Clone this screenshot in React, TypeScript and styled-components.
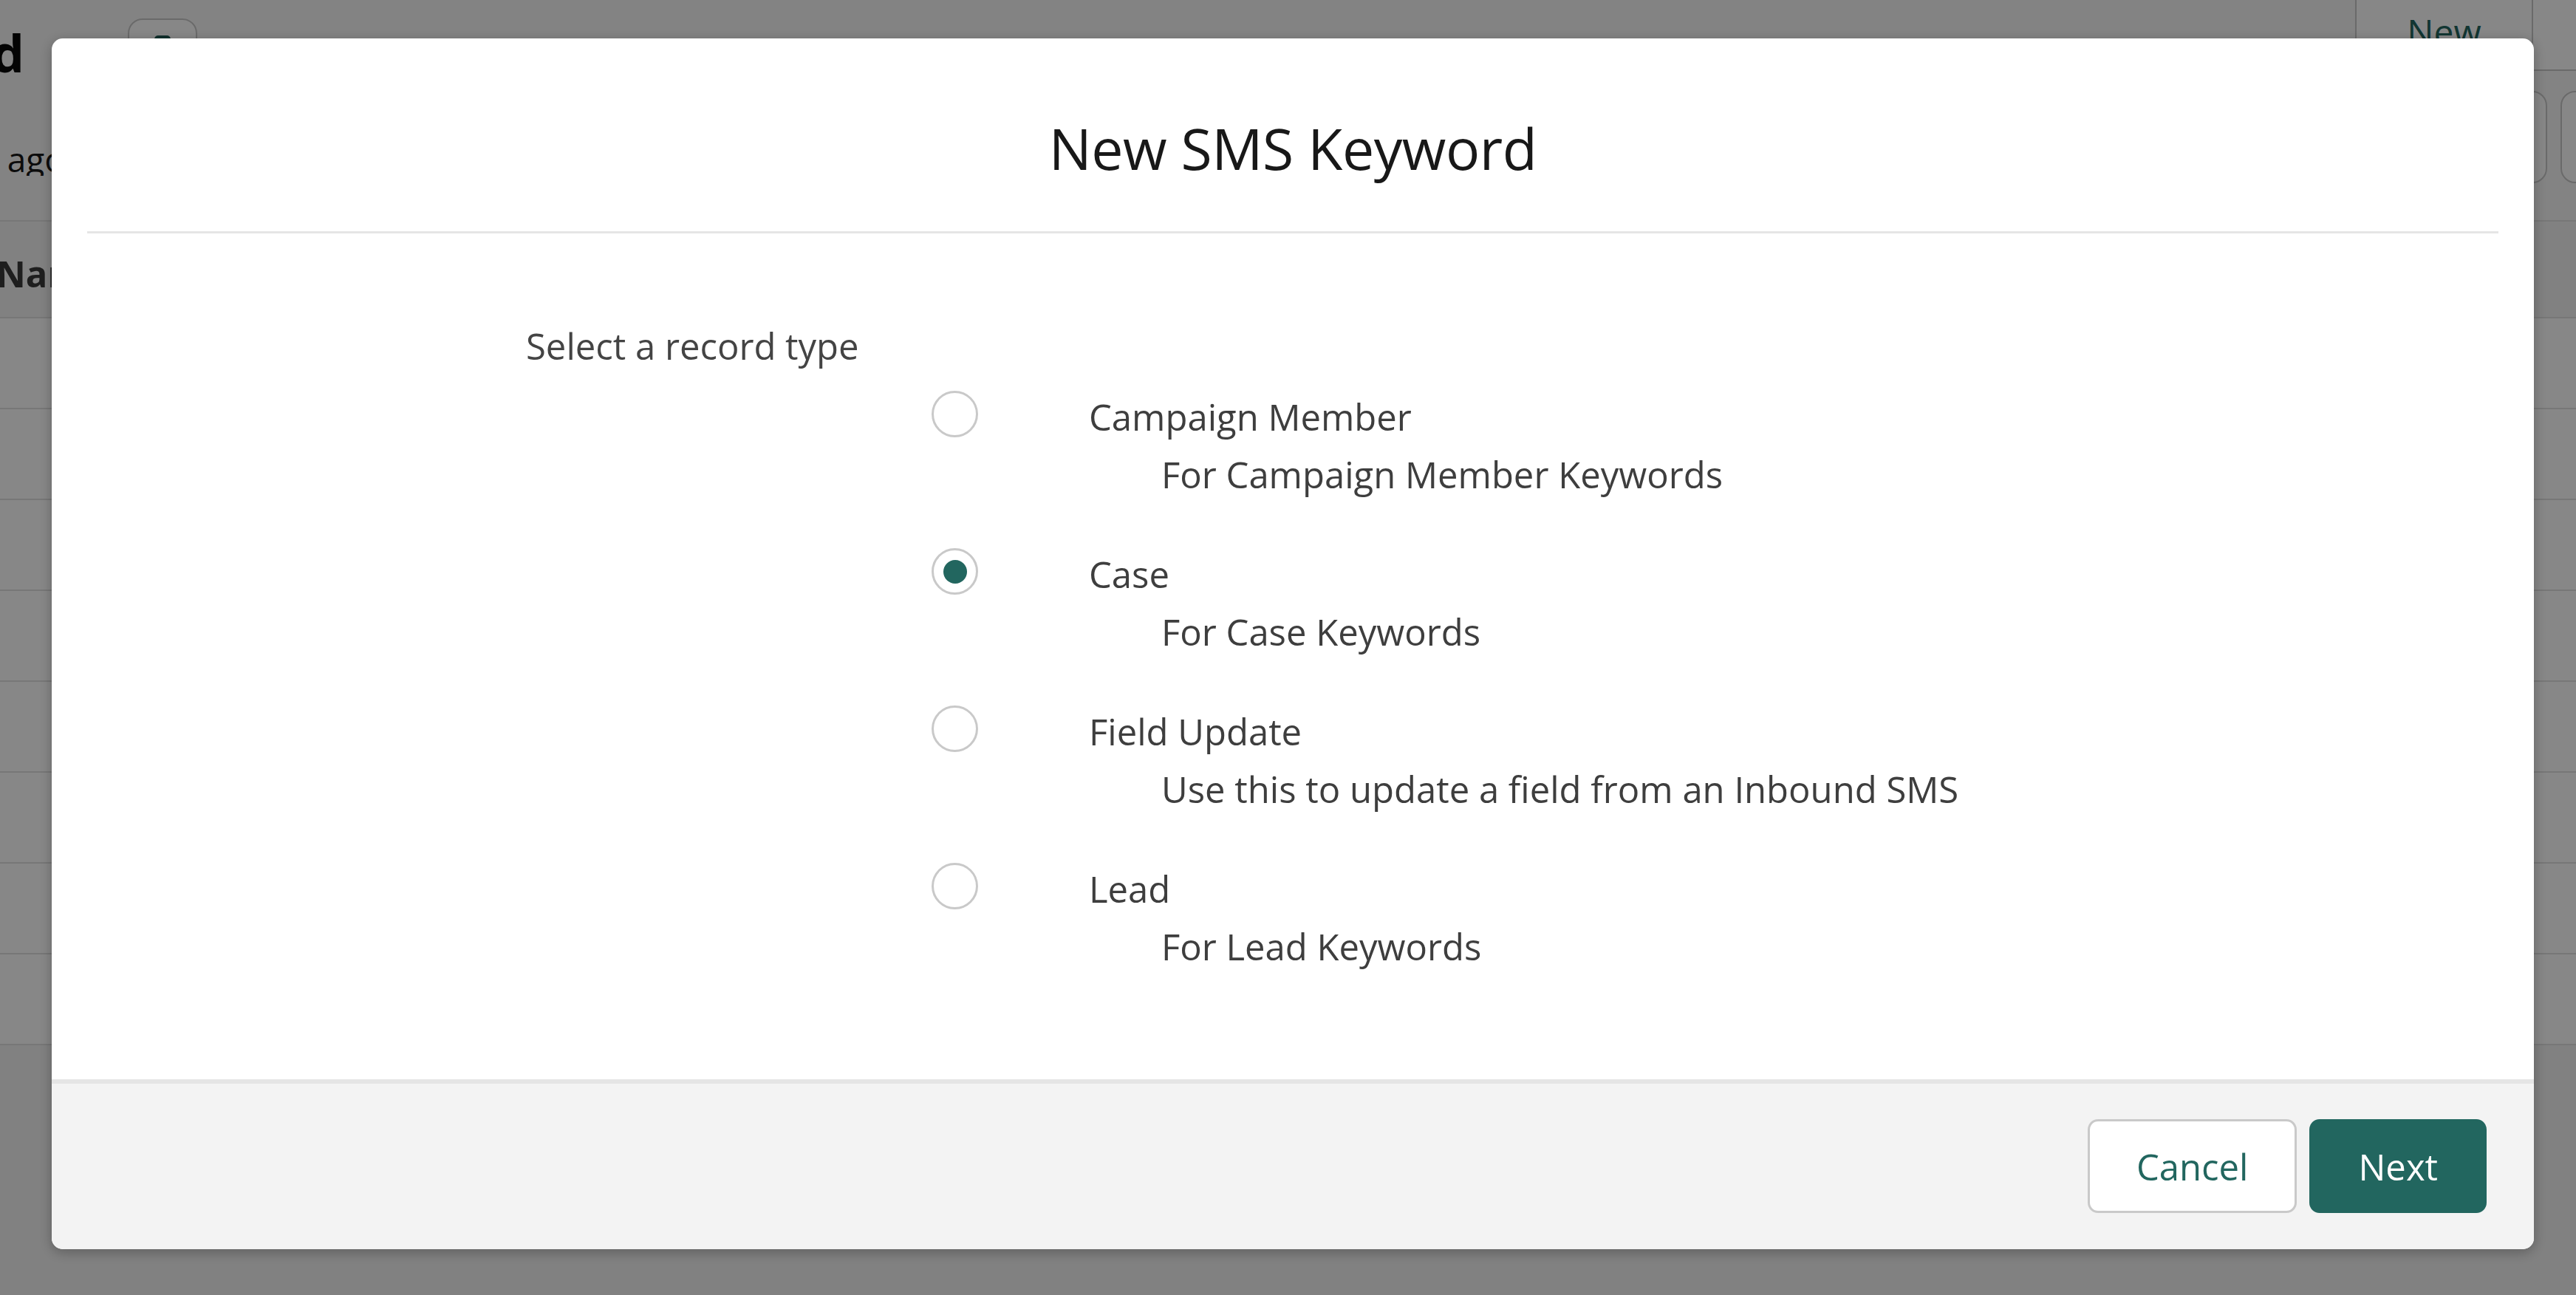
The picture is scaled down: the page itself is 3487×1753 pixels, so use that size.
import React from 'react';
import styled, { createGlobalStyle } from 'styled-components';

const TEAL = '#22665f';

const GlobalStyle = createGlobalStyle`
  html, body {
    margin: 0;
    padding: 0;
  }
  body {
    font-family: "Open Sans", "Noto Sans", sans-serif;
    background: #f3f3f3;
    overflow: hidden;
  }
  * {
    box-sizing: border-box;
  }
`;

// ---------- background page ----------

const Page = styled.div`
  width: 100%;
  height: 100vh;
  display: flex;
  flex-direction: column;
  background: #f3f3f3;
  overflow: hidden;
`;

const PageHeader = styled.header`
  height: 300px;
  background: #f8f8f8;
  border-bottom: 2px solid #e0e0e0;
  display: flex;
  flex-direction: column;
`;

const HeaderRow = styled.div<{ $height: number }>`
  height: ${(p) => p.$height}px;
  display: flex;
  align-items: flex-start;
`;

const TailClip = styled.div<{ $width: number; $top: number }>`
  width: ${(p) => p.$width}px;
  margin-top: ${(p) => p.$top}px;
  flex-shrink: 0;
  overflow: hidden;
  display: flex;
  justify-content: flex-end;
  white-space: nowrap;
`;

const PageTitle = styled.h1`
  margin: 0;
  font-size: 70px;
  line-height: 70px;
  font-weight: 700;
  color: #080808;
`;

const PageSubtitle = styled.span`
  font-size: 46px;
  line-height: 46px;
  color: #181818;
`;

const IconButton = styled.button<{ $top: number; $left?: number }>`
  width: 94px;
  height: 125px;
  margin-top: ${(p) => p.$top}px;
  margin-left: ${(p) => p.$left ?? 0}px;
  flex-shrink: 0;
  border: 2px solid #c9c9c9;
  border-radius: 20px;
  background: #ffffff;
  display: flex;
  justify-content: center;
  align-items: flex-start;
  padding-top: 21px;
`;

const Spacer = styled.div`
  flex: 1;
`;

const ActionGroup = styled.div<{ $top: number; $overflow: number; $gap: number }>`
  display: flex;
  gap: ${(p) => p.$gap}px;
  margin-top: ${(p) => p.$top}px;
  margin-right: -${(p) => p.$overflow}px;
  flex-shrink: 0;
`;

const GroupButton = styled.button<{ $first?: boolean }>`
  height: 126px;
  width: ${(p) => (p.$first ? 241 : 200)}px;
  border: 2px solid #c9c9c9;
  border-left-width: ${(p) => (p.$first ? 2 : 0)}px;
  border-radius: ${(p) => (p.$first ? '20px 0 0 20px' : '0 20px 20px 0')};
  background: #ffffff;
  color: ${TEAL};
  font-family: inherit;
  font-size: 48px;
  padding: 18px 0 0;
  display: flex;
  align-items: center;
  justify-content: center;
`;

const Table = styled.div`
  display: flex;
  flex-direction: column;
`;

const TableHead = styled.div`
  height: 131px;
  background: #f3f3f3;
  border-bottom: 2px solid #e0e0e0;
  display: flex;
  align-items: center;
  padding-top: 10px;
`;

const HeadCell = styled.span`
  margin-left: -5px;
  font-size: 49px;
  font-weight: 700;
  color: #3a3a3a;
`;

const TableRow = styled.div`
  height: 123px;
  background: #ffffff;
  border-bottom: 2px solid #e0e0e0;
`;

// ---------- modal ----------

const Backdrop = styled.div`
  position: fixed;
  inset: 0;
  background: rgba(0, 0, 0, 0.47);
  display: flex;
  align-items: flex-start;
`;

const Modal = styled.section`
  width: 3360px;
  margin: 52px 0 0 70px;
  background: #ffffff;
  border-radius: 15px;
  overflow: hidden;
  box-shadow: 0 4px 18px rgba(0, 0, 0, 0.28);
  display: flex;
  flex-direction: column;
`;

const ModalHeader = styled.div`
  margin: 0 48px;
  padding: 99px 0 62px;
  border-bottom: 3px solid #e5e5e5;
  text-align: center;
`;

const ModalTitle = styled.h2`
  margin: 0;
  font-size: 77px;
  line-height: 100px;
  font-weight: 400;
  color: #181818;
  letter-spacing: -0.5px;
`;

const ModalBody = styled.div`
  padding: 113px 0 141px 642px;
  display: flex;
  flex-direction: column;
`;

const FieldLabel = styled.div`
  font-size: 49px;
  line-height: 78px;
  color: #444444;
`;

const OptionList = styled.div`
  margin: 18px 0 0 549px;
  display: flex;
  flex-direction: column;
  gap: 57px;
`;

const Option = styled.label`
  display: flex;
  align-items: flex-start;
  gap: 150px;
  cursor: pointer;
`;

const Radio = styled.span<{ $checked?: boolean }>`
  width: 63px;
  height: 63px;
  margin-top: 4px;
  flex-shrink: 0;
  border: 3px solid #c9c9c9;
  border-radius: 50%;
  background: #ffffff;
  display: flex;
  align-items: center;
  justify-content: center;

  &::after {
    content: '';
    width: 32px;
    height: 32px;
    border-radius: 50%;
    background: ${TEAL};
    display: ${(p) => (p.$checked ? 'block' : 'none')};
  }
`;

const OptionText = styled.div`
  display: flex;
  flex-direction: column;
`;

const OptionLine = styled.span<{ $indent?: boolean }>`
  font-size: 49px;
  line-height: 78px;
  color: #3e3e3e;
  padding-left: ${(p) => (p.$indent ? 98 : 0)}px;
  white-space: nowrap;
`;

const ModalFooter = styled.div`
  background: #f3f3f3;
  border-top: 6px solid #e5e5e5;
  padding: 48px 64px 49px;
  display: flex;
  justify-content: flex-end;
  gap: 17px;
`;

const FooterButton = styled.button<{ $primary?: boolean }>`
  height: 127px;
  padding: 0 63px;
  border-radius: 14px;
  border: 3px solid ${(p) => (p.$primary ? TEAL : '#c9c9c9')};
  background: ${(p) => (p.$primary ? TEAL : '#ffffff')};
  color: ${(p) => (p.$primary ? '#ffffff' : TEAL)};
  font-family: inherit;
  font-size: 49px;
  cursor: pointer;
`;

const recordTypes = [
  { name: 'Campaign Member', description: 'For Campaign Member Keywords' },
  { name: 'Case', description: 'For Case Keywords' },
  { name: 'Field Update', description: 'Use this to update a field from an Inbound SMS' },
  { name: 'Lead', description: 'For Lead Keywords' },
];

const ListIcon = () => (
  <svg width="36" height="40" viewBox="0 0 36 40">
    <rect x="7" y="0" width="22" height="40" rx="5" fill="#1f5b54" />
  </svg>
);

const ChevronDown = () => (
  <svg width="32" height="32" viewBox="0 0 24 24" fill="none" stroke={TEAL} strokeWidth="2.5">
    <path d="M6 9l6 6 6-6" />
  </svg>
);

const App: React.FC = () => {
  const selected = 'Case';

  return (
    <>
      <GlobalStyle />
      <Page>
        <PageHeader>
          <HeaderRow $height={121}>
            <TailClip $width={33} $top={36}>
              <PageTitle>SMS Keyword</PageTitle>
            </TailClip>
            <IconButton $top={25} $left={140}>
              <ListIcon />
            </IconButton>
            <Spacer />
            <ActionGroup $top={-30} $overflow={142} $gap={0}>
              <GroupButton $first>New</GroupButton>
              <GroupButton aria-label="More actions">
                <ChevronDown />
              </GroupButton>
            </ActionGroup>
          </HeaderRow>
          <HeaderRow $height={177}>
            <TailClip $width={88} $top={71}>
              <PageSubtitle>Updated a few seconds ago</PageSubtitle>
            </TailClip>
            <Spacer />
            <ActionGroup $top={2} $overflow={73} $gap={18}>
              <IconButton $top={0} />
              <IconButton $top={0} />
            </ActionGroup>
          </HeaderRow>
        </PageHeader>
        <Table>
          <TableHead>
            <HeadCell>Name</HeadCell>
          </TableHead>
          {Array.from({ length: 8 }).map((_, i) => (
            <TableRow key={i} />
          ))}
        </Table>
      </Page>

      <Backdrop>
        <Modal role="dialog" aria-modal="true">
          <ModalHeader>
            <ModalTitle>New SMS Keyword</ModalTitle>
          </ModalHeader>
          <ModalBody>
            <FieldLabel>Select a record type</FieldLabel>
            <OptionList>
              {recordTypes.map((rt) => (
                <Option key={rt.name}>
                  <Radio $checked={rt.name === selected} />
                  <OptionText>
                    <OptionLine>{rt.name}</OptionLine>
                    <OptionLine $indent>{rt.description}</OptionLine>
                  </OptionText>
                </Option>
              ))}
            </OptionList>
          </ModalBody>
          <ModalFooter>
            <FooterButton>Cancel</FooterButton>
            <FooterButton $primary>Next</FooterButton>
          </ModalFooter>
        </Modal>
      </Backdrop>
    </>
  );
};

export default App;
